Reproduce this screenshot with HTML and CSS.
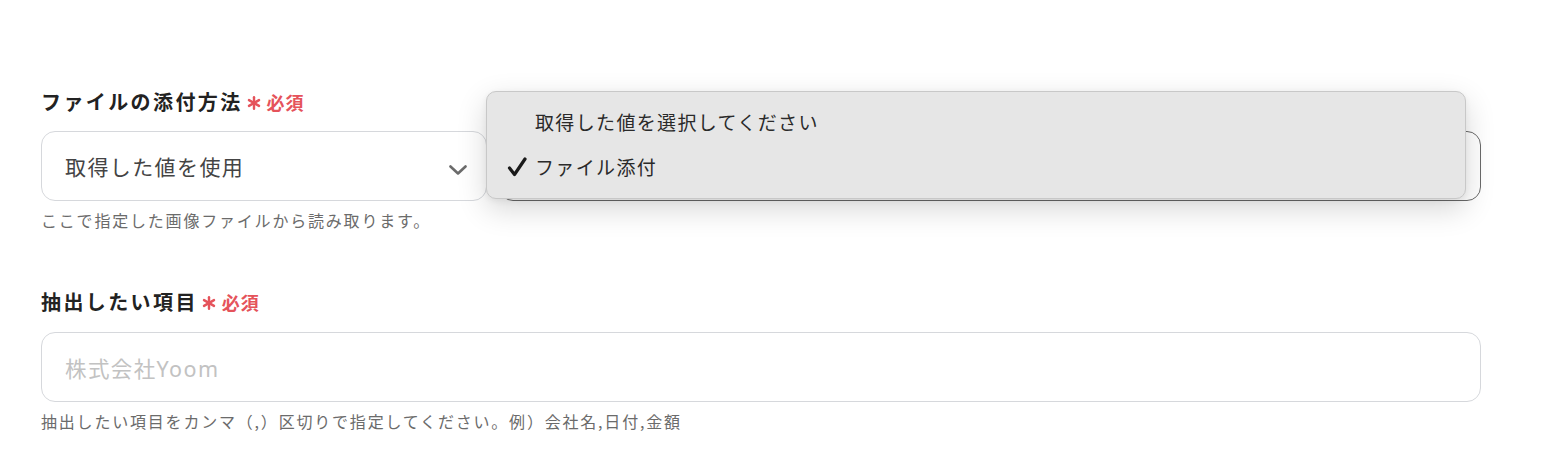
FILE: index.html
```html
<!DOCTYPE html>
<html lang="ja">
<head>
<meta charset="utf-8">
<link rel="stylesheet" href="styles.css">
</head>
<body>
<div class="form">
  <div class="field field-first">
    <div class="label">ファイルの添付方法<span class="req"><svg class="ast" width="14" height="14" viewBox="0 0 14 14"><g stroke="#e5535b" stroke-width="2.4" stroke-linecap="round"><line x1="7" y1="1.2" x2="7" y2="12.8"/><line x1="2" y1="4.1" x2="12" y2="9.9"/><line x1="2" y1="9.9" x2="12" y2="4.1"/></g></svg>必須</span></div>
    <div class="select-row">
      <div class="select">
        <span class="select-text">取得した値を使用</span>
        <svg class="chev" width="18" height="10" viewBox="0 0 18 10"><polyline points="1.5,1.5 9,8.5 16.5,1.5" fill="none" stroke="#6b6b6b" stroke-width="2.6" stroke-linecap="round" stroke-linejoin="round"/></svg>
      </div>
      <div class="select-dark"></div>
      <div class="popup">
        <div class="opt"><span class="mark"></span>取得した値を選択してください</div>
        <div class="opt"><span class="mark"><svg width="20" height="20" viewBox="0 0 20 20"><polyline points="2.5,11 7.5,17.5 18,2" fill="none" stroke="#1a1a1a" stroke-width="3.2" stroke-linecap="round" stroke-linejoin="round"/></svg></span>ファイル添付</div>
      </div>
    </div>
    <div class="help">ここで指定した画像ファイルから読み取ります。</div>
  </div>
  <div class="field">
    <div class="label">抽出したい項目<span class="req"><svg class="ast" width="14" height="14" viewBox="0 0 14 14"><g stroke="#e5535b" stroke-width="2.4" stroke-linecap="round"><line x1="7" y1="1.2" x2="7" y2="12.8"/><line x1="2" y1="4.1" x2="12" y2="9.9"/><line x1="2" y1="9.9" x2="12" y2="4.1"/></g></svg>必須</span></div>
    <div class="input"><span class="ph">株式会社Yoom</span></div>
    <div class="help">抽出したい項目をカンマ（,）区切りで指定してください。例）会社名,日付,金額</div>
  </div>
</div>
</body>
</html>
```

FILE: styles.css
```css
html, body {
  margin: 0;
  padding: 0;
  background: #ffffff;
}
body {
  font-family: "Noto Sans CJK JP", "Noto Sans", sans-serif;
  color: #222;
}
.form {
  padding: 88px 0 0 41px;
  width: 1440px;
}
.field {
  display: flex;
  flex-direction: column;
}
.field-first {
  margin-bottom: 56px;
}
.label {
  height: 28px;
  line-height: 28px;
  font-size: 20px;
  font-weight: 700;
  letter-spacing: 2.4px;
  color: #222;
  display: flex;
  align-items: center;
  margin-bottom: 15px;
}
.field + .field .label {
  margin-bottom: 16px;
}
.req {
  color: #e5535b;
  font-size: 18px;
  font-weight: 700;
  letter-spacing: 1px;
  margin-left: 4px;
  display: flex;
  align-items: center;
}
.ast {
  display: block;
  margin-right: 6px;
  margin-top: 2px;
}
.select-row {
  position: relative;
  display: flex;
  height: 70px;
}
.select {
  box-sizing: border-box;
  width: 446px;
  height: 70px;
  border: 1px solid #d6d8dc;
  border-radius: 14px;
  display: flex;
  align-items: center;
  justify-content: space-between;
  padding: 0 19px 0 23px;
  background: #fff;
}
.select-text {
  font-size: 21px;
  letter-spacing: 1.4px;
  color: #444;
}
.chev {
  display: block;
  margin-top: 8px;
}
.select-dark {
  box-sizing: border-box;
  margin-left: 12px;
  flex: 1;
  height: 70px;
  border: 1px solid #6a6a6a;
  border-radius: 14px;
  background: #fff;
}
.popup {
  position: absolute;
  left: 445px;
  top: -40px;
  width: 980px;
  height: 108px;
  box-sizing: border-box;
  background: #e6e6e6;
  border: 1px solid #c8c8c8;
  border-radius: 10px;
  box-shadow: 0 10px 30px rgba(0, 0, 0, 0.16), 0 2px 6px rgba(0, 0, 0, 0.06);
  padding-top: 7px;
}
.opt {
  height: 45px;
  display: flex;
  align-items: center;
  font-size: 19px;
  letter-spacing: 1.35px;
  color: #2a2a2a;
}
.mark {
  width: 48px;
  display: flex;
  justify-content: flex-end;
  box-sizing: border-box;
}
.mark svg {
  display: block;
  margin-right: 8px;
}
.input {
  box-sizing: border-box;
  width: 1440px;
  height: 70px;
  border: 1px solid #d6d8dc;
  border-radius: 14px;
  display: flex;
  align-items: center;
  padding-left: 23px;
}
.ph {
  font-family: "Noto Sans", "Noto Sans CJK JP", sans-serif;
  font-size: 21.5px;
  color: #c2c2c2;
  letter-spacing: 1.4px;
}
.help {
  margin-top: 7px;
  height: 24px;
  line-height: 24px;
  font-size: 16px;
  letter-spacing: 1.8px;
  color: #6b6b6b;
}
```
